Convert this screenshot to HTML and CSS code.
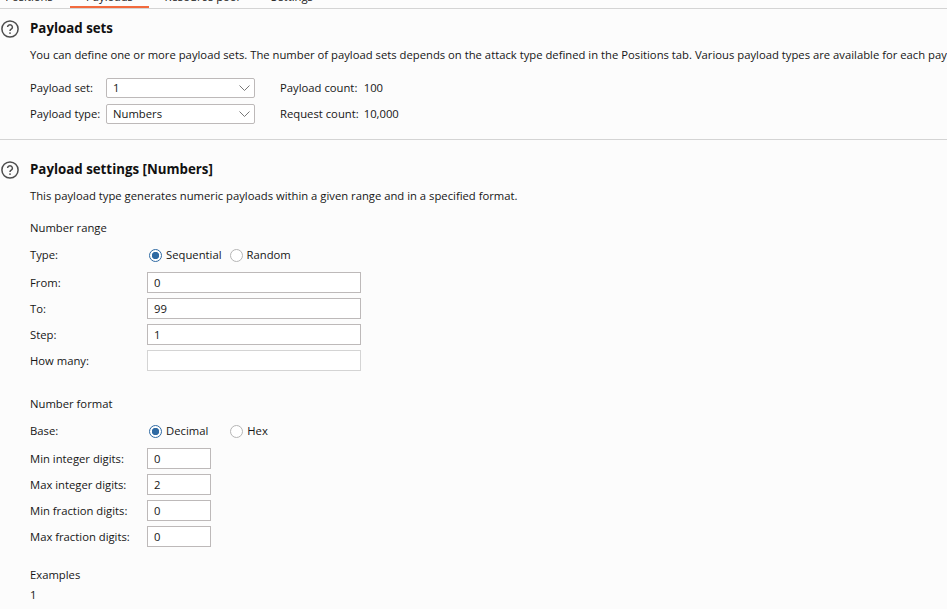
FILE: index.html
```html
<!DOCTYPE html>
<html lang="en">
<head>
<meta charset="utf-8">
<title>Payloads</title>
<link rel="stylesheet" href="styles.css">
</head>
<body>
<nav class="tabs">
  <span class="tab tab-first">Positions</span>
  <span class="tab tab-active">Payloads</span>
  <span class="tab tab-third">Resource pool</span>
  <span class="tab tab-fourth">Settings</span>
</nav>
<section class="panel panel-sets">
  <header class="head">
    <svg class="help" viewBox="0 0 18 18" aria-hidden="true"><circle cx="9" cy="9" r="8.1" fill="none" stroke="#4d4d4d" stroke-width="1.5"/><path d="M6.6 7.1a2.4 2.4 0 1 1 3.6 2.1c-.8.5-1.2.9-1.2 1.8" fill="none" stroke="#4d4d4d" stroke-width="1.5"/><circle cx="9" cy="13.1" r=".9" fill="#4d4d4d"/></svg>
    <h2>Payload sets</h2>
  </header>
  <p class="desc desc-sets">You can define one or more payload sets. The number of payload sets depends on the attack type defined in the Positions tab. Various payload types are available for each payload set, and each payload type can be customized in different ways.</p>
  <div class="sets-grid">
    <label>Payload set:</label>
    <div class="select"><span>1</span><svg viewBox="0 0 11 6" class="chev"><path d="M.5.5 5.5 5.5 10.5.5" fill="none" stroke="#777"/></svg></div>
    <span class="count">Payload count:</span><span>100</span>
    <label>Payload type:</label>
    <div class="select"><span>Numbers</span><svg viewBox="0 0 11 6" class="chev"><path d="M.5.5 5.5 5.5 10.5.5" fill="none" stroke="#777"/></svg></div>
    <span class="count">Request count:</span><span>10,000</span>
  </div>
</section>
<section class="panel panel-settings">
  <header class="head">
    <svg class="help" viewBox="0 0 18 18" aria-hidden="true"><circle cx="9" cy="9" r="8.1" fill="none" stroke="#4d4d4d" stroke-width="1.5"/><path d="M6.6 7.1a2.4 2.4 0 1 1 3.6 2.1c-.8.5-1.2.9-1.2 1.8" fill="none" stroke="#4d4d4d" stroke-width="1.5"/><circle cx="9" cy="13.1" r=".9" fill="#4d4d4d"/></svg>
    <h2>Payload settings [Numbers]</h2>
  </header>
  <p class="desc desc-settings">This payload type generates numeric payloads within a given range and in a specified format.</p>

  <h3 class="group">Number range</h3>
  <div class="form">
    <div class="row row-radio"><label>Type:</label><div class="radios"><span class="radio on"></span><span class="rlabel r-seq">Sequential</span><span class="radio"></span><span class="rlabel">Random</span></div></div>
    <div class="row"><label>From:</label><div class="input wide">0</div></div>
    <div class="row"><label>To:</label><div class="input wide">99</div></div>
    <div class="row"><label>Step:</label><div class="input wide">1</div></div>
    <div class="row"><label>How many:</label><div class="input wide disabled"></div></div>
  </div>

  <h3 class="group group-format">Number format</h3>
  <div class="form">
    <div class="row row-radio"><label>Base:</label><div class="radios"><span class="radio on"></span><span class="rlabel r-dec">Decimal</span><span class="radio"></span><span class="rlabel">Hex</span></div></div>
    <div class="row"><label>Min integer digits:</label><div class="input narrow">0</div></div>
    <div class="row"><label>Max integer digits:</label><div class="input narrow">2</div></div>
    <div class="row"><label>Min fraction digits:</label><div class="input narrow">0</div></div>
    <div class="row"><label>Max fraction digits:</label><div class="input narrow">0</div></div>
  </div>

  <h3 class="group group-examples">Examples</h3>
  <div class="example">1</div>
</section>
</body>
</html>
```
FILE: styles.css
```css
* { box-sizing: border-box; }
html, body { margin: 0; height: 100%; overflow: hidden; }
body {
  background: #fcfcfc;
  color: #161616;
  font: 11.28px/16px "Open Sans", "Noto Sans", sans-serif;
  width: 947px;
  height: 609px;
}
.tabs {
  display: flex;
  align-items: flex-end;
  height: 9px;
  overflow: hidden;
  border-bottom: 1px solid #d4d4d4;
}
.tab {
  flex: none;
  height: 8px;
  display: flex;
  align-items: flex-end;
  justify-content: center;
  line-height: 16px;
  padding-bottom: 3px;
  white-space: nowrap;
}
.tab-first { width: 58px; margin-right: 12px; }
.tab-active { width: 79px; border-bottom: 2px solid #f26a3d; padding-bottom: 1px; }
.tab-third { width: 106px; }
.tab-fourth { width: 74px; }
.panel { padding-left: 30px; }
.panel-sets { height: 131px; border-bottom: 1px solid #d4d4d4; padding-top: 11px; }
.panel-settings { padding-top: 21px; }
.head { display: flex; align-items: center; height: 18px; position: relative; }
.help { position: absolute; left: -29px; top: 0; width: 18px; height: 18px; }
h2 { margin: 0; padding-bottom: 2px; font-size: 13.3px; font-weight: 700; color: #111; line-height: 18px; }
.desc { margin: 0; white-space: nowrap; }
.desc-sets { margin-top: 9px; }
.desc-settings { margin-top: 9px; }
.sets-grid {
  display: grid;
  grid-template-columns: 76px 149px auto auto;
  grid-auto-rows: 20px;
  row-gap: 6px;
  align-items: center;
  justify-content: start;
  margin-top: 15px;
}
.count { margin-left: 25px; margin-right: 5px; }
.select {
  height: 20px;
  border: 1px solid #bdb9b9;
  border-radius: 2px;
  background: #fff;
  display: flex;
  align-items: center;
  justify-content: space-between;
  padding: 0 3px 0 6px;
}
.chev { width: 11px; height: 6px; margin-right: 1px; }
.group { margin: 0; font-size: 11.28px; font-weight: 400; line-height: 16px; }
.panel-settings > .group:first-of-type { margin-top: 16px; }
.group-format { margin-top: 25px; }
.group-examples { margin-top: 20px; }
.form { margin-top: 8px; display: flex; flex-direction: column; gap: 5px; }
.row { display: flex; align-items: center; height: 21px; }
.row-radio { height: 22px; margin-bottom: 1px; }
.row label { width: 117px; flex: none; white-space: nowrap; }
.input {
  height: 21px;
  border: 1px solid #bdb9b9;
  background: #fff;
  padding-left: 6px;
  line-height: 19px;
}
.wide { width: 214px; }
.narrow { width: 64px; }
.disabled { border-color: #d4d4d4; }
.radios { display: flex; align-items: center; }
.radio {
  width: 13px;
  height: 13px;
  border: 1px solid #b5b5b5;
  border-radius: 50%;
  background: #fff;
  margin-left: 2px;
  flex: none;
}
.radio.on { border-color: #2f6aa3; background: radial-gradient(circle, #2f6aa3 0 3.4px, #fff 4px); }
.rlabel { margin-left: 4px; }
.r-seq { margin-right: 6px; }
.r-dec { margin-right: 20px; }
.example { margin-top: 4px; }
```
